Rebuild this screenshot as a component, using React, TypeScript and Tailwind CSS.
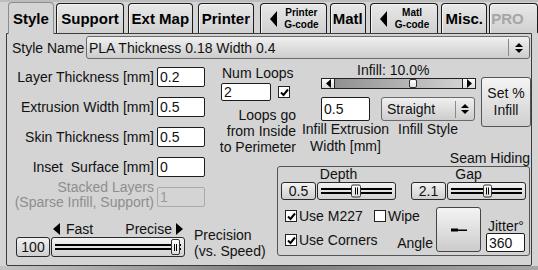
import React from 'react';

type Kids = { children?: React.ReactNode; className?: string };

function Tri({ dir, w, h }: { dir: 'l' | 'r'; w: number; h: number }) {
  const pts = dir === 'l' ? `${w},0 0,${h / 2} ${w},${h}` : `0,0 ${w},${h / 2} 0,${h}`;
  return (
    <svg width={w} height={h} viewBox={`0 0 ${w} ${h}`} className="shrink-0">
      <polygon points={pts} fill="#000" />
    </svg>
  );
}

function UpDown() {
  return (
    <svg width="8" height="12" viewBox="0 0 8 12" className="shrink-0">
      <polygon points="0,5 4,1 8,5" fill="#000" />
      <polygon points="0,7 4,11 8,7" fill="#000" />
    </svg>
  );
}

function Tab({ children, className = '', selected, muted }: Kids & { selected?: boolean; muted?: boolean }) {
  const base = 'flex items-center rounded-t-[4px] border border-b-0 font-bold text-[15px] leading-[18px]';
  const look = selected
    ? 'relative z-10 -mb-px h-[32px] bg-[#d4d4d4] border-[#8c8c8c] justify-center'
    : 'h-[30px] bg-gradient-to-b from-[#e8e8e8] to-[#d0d0d0] border-[#1c1c1c] shadow-[inset_1px_1px_0_#f4f4f4]';
  return (
    <div className={`${base} ${look} ${muted ? 'text-[#a6a6a6]' : 'text-black'} ${className}`}>{children}</div>
  );
}

function GTab({ top }: { top: string }) {
  return (
    <>
      <Tri dir="l" w={7} h={16} />
      <div className="flex-1 flex flex-col items-center text-[10px] leading-[12px] font-bold">
        <span>{top}</span>
        <span>G-code</span>
      </div>
    </>
  );
}

function Field({ children, className = '' }: Kids) {
  return (
    <div className={`bg-white border border-[#1c1c1c] rounded-[2px] flex items-center pl-[2px] ${className}`}>
      {children}
    </div>
  );
}

function NumBox({ children, className = '' }: Kids) {
  return (
    <div
      className={`border border-[#2a2a2a] rounded-[3px] bg-gradient-to-b from-[#f2f2f2] to-[#cfcfcf] flex items-center justify-center ${className}`}
    >
      {children}
    </div>
  );
}

function Slider({ className = '', thumb = '' }: { className?: string; thumb?: string }) {
  return (
    <div
      className={`relative border border-[#2a2a2a] rounded-[3px] bg-gradient-to-b from-[#f2f2f2] to-[#d2d2d2] flex items-center px-[3px] ${className}`}
    >
      <div className="w-full h-[6px] border-y-2 border-black" />
      <div
        className={`absolute top-1/2 -translate-y-1/2 bg-gradient-to-b from-white to-[#dedede] border border-[#333] rounded-[2px] flex items-center justify-center gap-[1px] ${thumb}`}
      >
        <div className="w-px h-[7px] bg-black" />
        <div className="w-px h-[7px] bg-black" />
      </div>
    </div>
  );
}

function Check({ checked }: { checked?: boolean }) {
  return (
    <span className="w-[12px] h-[12px] border border-[#222] bg-white flex items-center justify-center shrink-0">
      {checked && (
        <svg width="9" height="9" viewBox="0 0 9 9">
          <path d="M1 4.5 L3.5 7 L8 1.5" stroke="#000" strokeWidth="2" fill="none" />
        </svg>
      )}
    </span>
  );
}

function Row({ label, value }: { label: string; value: string }) {
  return (
    <div className="flex items-center h-[20px]">
      <div className="w-[147px] text-right whitespace-pre">{label}</div>
      <Field className="ml-[3px] w-[48px] h-[20px]">{value}</Field>
    </div>
  );
}

export default function App() {
  return (
    <div className="w-[538px] h-[270px] overflow-hidden bg-[#d4d4d4] font-['Liberation_Sans',Arial,sans-serif] text-[14px] leading-[16px] text-[#111]">
      <div className="h-[2px] bg-[#bcbcbc]" />

      {/* tabs */}
      <div className="flex items-end h-[31px] pl-[8px]">
        <Tab selected className="w-[47px]">Style</Tab>
        <Tab className="ml-[2px] w-[70px] justify-center">Support</Tab>
        <Tab className="ml-[4px] w-[66px] justify-center">Ext Map</Tab>
        <Tab className="ml-[5px] w-[58px] justify-center">Printer</Tab>
        <Tab className="ml-[6px] w-[68px] pl-[9px]">
          <GTab top="Printer" />
        </Tab>
        <Tab className="ml-[3px] w-[37px] justify-center">Matl</Tab>
        <Tab className="ml-[4px] w-[70px] pl-[9px]">
          <GTab top="Matl" />
        </Tab>
        <Tab className="ml-[3px] w-[47px] justify-center">Misc.</Tab>
        <Tab muted className="ml-[2px] w-[50px] pl-[1px]">PRO</Tab>
      </div>

      {/* panel */}
      <div className="ml-[6px] w-[526px] h-[233px] border border-[#3c3c3c] rounded-b-[2px]">
        <div className="mt-[2px] flex items-center h-[23px]">
          <div className="w-[79px] pl-[5px] whitespace-nowrap">Style Name</div>
          <div className="w-[444px] h-[23px] border border-[#6a6a6a] rounded-[3px] bg-gradient-to-b from-[#f0f0f0] to-[#cdcdcd] flex items-center pl-[2px]">
            <span className="flex-1">PLA Thickness 0.18 Width 0.4</span>
            <div className="w-px h-[17px] bg-[#8a8a8a]" />
            <div className="w-[20px] flex justify-center">
              <UpDown />
            </div>
          </div>
        </div>

        {/* top section */}
        <div className="flex h-[92px]">
          <div className="w-[198px] pt-[8px] flex flex-col gap-[10px]">
            <Row label="Layer Thickness [mm]" value="0.2" />
            <Row label="Extrusion Width [mm]" value="0.5" />
            <Row label="Skin Thickness [mm]" value="0.5" />
          </div>

          <div className="ml-[14px] w-[77px] pt-[6px] flex flex-col">
            <div className="pl-[3px] whitespace-nowrap">Num Loops</div>
            <div className="mt-[2px] flex items-center pl-[2px]">
              <Field className="w-[50px] h-[18px]">2</Field>
              <div className="ml-[7px]">
                <Check checked />
              </div>
            </div>
            <div className="mt-[6px] text-right whitespace-nowrap">
              Loops go
              <br />
              from Inside
              <br />
              to Perimeter
            </div>
          </div>

          <div className="ml-[25px] w-[155px] pt-[3px] flex flex-col">
            <div className="pl-[36px] whitespace-nowrap">Infill: 10.0%</div>
            <div className="relative w-[155px] h-[17px] border border-[#222] flex bg-gradient-to-r from-[#8a8a8a] to-[#d8d8d8]">
              <div className="w-[13px] bg-gradient-to-b from-white to-[#dcdcdc] border-r border-[#222] flex items-center justify-center">
                <Tri dir="l" w={5} h={9} />
              </div>
              <div className="flex-1" />
              <div className="w-[13px] bg-gradient-to-b from-white to-[#dcdcdc] border-l border-[#222] flex items-center justify-center">
                <Tri dir="r" w={5} h={9} />
              </div>
              <div className="absolute left-[87px] top-0 bottom-0 w-[8px] bg-gradient-to-b from-white to-[#e4e4e4] border border-[#333] rounded-[2px]" />
            </div>
            <div className="mt-[8px] flex items-start">
              <div className="w-[49px] flex flex-col items-center">
                <Field className="w-[49px] h-[24px]">0.5</Field>
                <div className="text-center whitespace-nowrap leading-[17px]">
                  Infill Extrusion
                  <br />
                  Width [mm]
                </div>
              </div>
              <div className="ml-[11px] w-[94px] flex flex-col items-center">
                <div className="w-[94px] h-[24px] border border-[#6a6a6a] rounded-[3px] bg-gradient-to-b from-[#f0f0f0] to-[#cdcdcd] flex items-center pl-[5px]">
                  <span className="flex-1">Straight</span>
                  <div className="w-px h-[17px] bg-[#8a8a8a]" />
                  <div className="w-[18px] flex justify-center">
                    <UpDown />
                  </div>
                </div>
                <div className="whitespace-nowrap leading-[17px]">Infill Style</div>
              </div>
            </div>
          </div>

          <div className="ml-[5px] mt-[18px] w-[50px] h-[50px] border border-[#555] rounded-[3px] bg-gradient-to-b from-[#f4f4f4] to-[#d0d0d0] flex flex-col items-center justify-center leading-[17px]">
            <span>Set %</span>
            <span>Infill</span>
          </div>
        </div>

        {/* bottom section */}
        <div className="flex">
          <div className="w-[270px] flex flex-col">
            <div className="mt-[6px]">
              <Row label="Inset  Surface [mm]" value="0" />
            </div>
            <div className="mt-[10px] flex items-center h-[20px]">
              <div className="w-[147px] -mt-[4px] text-right whitespace-nowrap leading-[15px] text-[#8e8e8e]">
                Stacked Layers
                <br />
                (Sparse Infill, Support)
              </div>
              <div className="ml-[3px] w-[48px] h-[20px] border border-[#aaaaaa] rounded-[2px] pl-[2px] flex items-center text-[#9a9a9a]">
                1
              </div>
            </div>
            <div className="mt-[15px] flex items-start">
              <NumBox className="ml-[9px] mt-[15px] w-[34px] h-[20px]">100</NumBox>
              <div className="ml-[1px] w-[134px] flex flex-col">
                <div className="h-[14px] leading-[14px] flex items-center justify-between px-[2px] mb-px">
                  <div className="flex items-center">
                    <Tri dir="l" w={7} h={12} />
                    <span className="ml-[6px]">Fast</span>
                  </div>
                  <div className="flex items-center">
                    <span className="mr-[4px]">Precise</span>
                    <Tri dir="r" w={7} h={12} />
                  </div>
                </div>
                <Slider className="w-[134px] h-[20px]" thumb="left-[119px] w-[9px] h-[16px]" />
              </div>
              <div className="ml-[9px] mt-[5px] whitespace-nowrap">
                Precision
                <br />
                (vs. Speed)
              </div>
            </div>
          </div>

          {/* seam hiding */}
          <div className="w-[253px] flex flex-col">
            <div className="text-right leading-[15px] whitespace-nowrap">Seam Hiding</div>
            <div className="h-[90px] border border-[#555] rounded-[3px] flex flex-col">
              <div className="flex">
                <div className="ml-[3px] w-[115px] flex flex-col">
                  <div className="text-center leading-[14px]">Depth</div>
                  <div className="mt-px flex">
                    <NumBox className="w-[35px] h-[18px]">0.5</NumBox>
                    <Slider className="ml-px w-[79px] h-[18px]" thumb="left-[33px] w-[10px] h-[13px]" />
                  </div>
                </div>
                <div className="ml-[15px] w-[115px] flex flex-col">
                  <div className="text-center leading-[14px]">Gap</div>
                  <div className="mt-px flex">
                    <NumBox className="w-[35px] h-[18px]">2.1</NumBox>
                    <Slider className="ml-px w-[79px] h-[18px]" thumb="left-[35px] w-[9px] h-[13px]" />
                  </div>
                </div>
              </div>

              <div className="mt-[7px] flex">
                <div className="ml-[7px] w-[151px] flex flex-col">
                  <div className="mt-[2px] flex items-center h-[14px]">
                    <div className="w-[89px] flex items-center">
                      <Check checked />
                      <span className="ml-[2px]">Use M227</span>
                    </div>
                    <Check />
                    <span className="ml-[2px]">Wipe</span>
                  </div>
                  <div className="mt-[10px] flex items-start">
                    <div className="flex items-center h-[14px]">
                      <Check checked />
                      <span className="ml-[2px]">Use Corners</span>
                    </div>
                    <span className="ml-auto mr-[3px] mt-[3px] leading-[14px]">Angle</span>
                  </div>
                </div>
                <div className="w-[45px] h-[45px] border border-[#444] rounded-[3px] bg-gradient-to-b from-[#f4f4f4] to-[#cccccc] flex items-center justify-center">
                  <svg width="16" height="4" viewBox="0 0 16 4">
                    <rect x="0" y="0.5" width="7" height="3" fill="#000" />
                    <rect x="6" y="1.5" width="10" height="1.5" fill="#000" />
                  </svg>
                </div>
                <div className="ml-[5px] w-[39px] mt-[13px] flex flex-col">
                  <div className="pl-[2px] leading-[13px] whitespace-nowrap">Jitter°</div>
                  <Field className="w-[39px] h-[19px]">360</Field>
                </div>
              </div>
            </div>
          </div>
        </div>
      </div>

      <div className="h-[4px] bg-gradient-to-r from-[#c4c4c4] via-[#7e7e7e] to-[#a6a6a6]" />
    </div>
  );
}
